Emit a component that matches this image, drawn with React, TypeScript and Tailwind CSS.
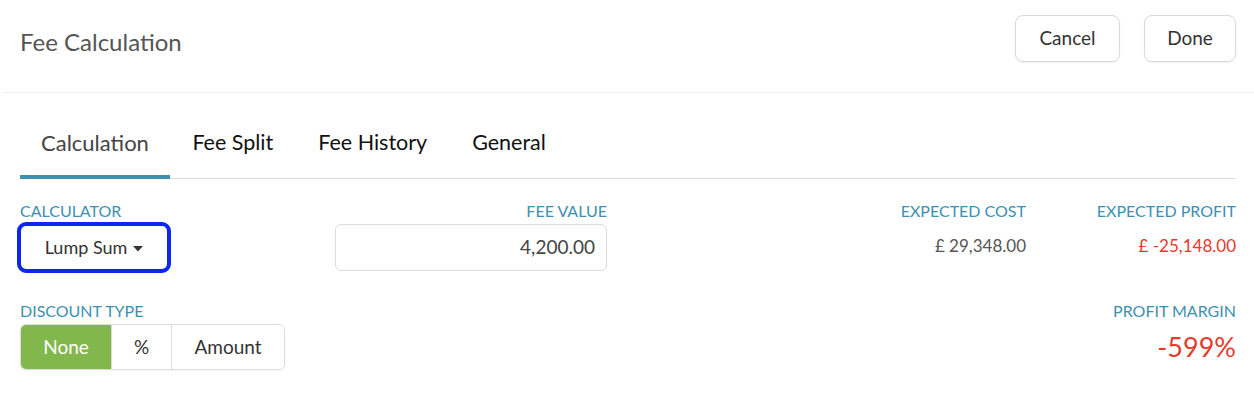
import { useState } from 'react'

const tabs = ['Calculation', 'Fee Split', 'Fee History', 'General']
const discounts = ['None', '%', 'Amount']

export default function App() {
  const [active, setActive] = useState('Calculation')
  const [discount, setDiscount] = useState('None')

  return (
    <div className="w-[1254px] h-[414px] bg-white font-['Lato',sans-serif] text-[#333]">
      {/* header */}
      <div className="ml-1 flex h-[93px] items-center justify-between border-b border-[#ececec] pl-4 pr-[18px]">
        <h1 className="text-[24px] leading-none text-[#555] pb-[8px]">Fee Calculation</h1>
        <div className="flex items-center gap-6 pb-[16px]">
          <button
            type="button"
            className="h-[47px] w-[105px] rounded-lg border border-[#d9d9d9] text-[19px] text-[#333] shadow-[0_1px_2px_rgba(0,0,0,0.06)]"
          >
            Cancel
          </button>
          <button
            type="button"
            className="h-[47px] w-[92px] rounded-lg border border-[#d9d9d9] text-[19px] text-[#333] shadow-[0_1px_2px_rgba(0,0,0,0.06)]"
          >
            Done
          </button>
        </div>
      </div>

      <div className="pl-5 pr-[18px]">
        {/* tabs */}
        <div className="flex h-[86px] items-end border-b border-[#dddddd]">
          {tabs.map((t) => (
            <button
              key={t}
              type="button"
              onClick={() => setActive(t)}
              className={
                t === active
                  ? 'mb-[-1px] h-[66px] border-b-4 border-[#3d90b0] px-[21px] pb-[3px] text-[22px] text-[#444]'
                  : 'mb-[-1px] h-[66px] border-b-4 border-transparent px-[22.5px] pb-[3px] text-[21.5px] text-[#111]'
              }
            >
              {t}
            </button>
          ))}
        </div>

        {/* row 1 */}
        <div className="mt-[22px] flex items-start">
          <div className="w-[315px]">
            <div className="text-[16px] leading-[20px] uppercase text-[#3d90b0]">Calculator</div>
            <button
              type="button"
              className="-ml-[3px] mt-[1px] flex h-[51px] w-[154px] items-center justify-center gap-[6px] rounded-[9px] border-4 border-[#0a28f2] text-[18px] text-[#333]"
            >
              Lump Sum
              <svg width="10" height="6" viewBox="0 0 10 6" className="mt-[2px]">
                <path d="M0 0 L10 0 L5 5.5 Z" fill="#333" />
              </svg>
            </button>
          </div>
          <div className="w-[272px]">
            <div className="text-right text-[16px] leading-[20px] uppercase text-[#3d90b0]">Fee Value</div>
            <div className="mt-[3px] flex h-[47px] items-center justify-end rounded-md border border-[#dcdcdc] px-[11px] text-[19px] text-[#444]">
              4,200.00
            </div>
          </div>
          <div className="flex-1 text-right">
            <div className="text-[16px] leading-[20px] uppercase text-[#3d90b0]">Expected Cost</div>
            <div className="mt-[12px] text-[17px] text-[#555]">£ 29,348.00</div>
          </div>
          <div className="w-[210px] text-right">
            <div className="text-[16px] leading-[20px] uppercase text-[#3d90b0]">Expected Profit</div>
            <div className="mt-[12px] text-[17px] text-[#e8392b]">£ -25,148.00</div>
          </div>
        </div>

        {/* row 2 */}
        <div className="mt-[28px] flex items-start justify-between">
          <div>
            <div className="text-[16px] leading-[20px] uppercase text-[#3d90b0]">Discount Type</div>
            <div className="mt-[3px] flex h-[46px] overflow-hidden rounded-md border border-[#dcdcdc] shadow-[0_1px_2px_rgba(0,0,0,0.05)]">
              {discounts.map((d, i) => (
                <button
                  key={d}
                  type="button"
                  onClick={() => setDiscount(d)}
                  className={
                    (d === discount ? 'bg-[#82b74b] text-white ' : 'bg-white text-[#333] ') +
                    (i > 0 ? 'border-l border-[#dcdcdc] ' : '') +
                    (d === 'None' ? 'w-[90px] ' : d === '%' ? 'w-[60px] ' : 'w-[113px] ') +
                    'text-[19px]'
                  }
                >
                  {d}
                </button>
              ))}
            </div>
          </div>
          <div className="text-right">
            <div className="text-[16px] leading-[20px] uppercase text-[#3d90b0]">Profit Margin</div>
            <div className="mt-[10px] text-[27px] leading-[32px] text-[#e8392b]">-599%</div>
          </div>
        </div>
      </div>
    </div>
  )
}
